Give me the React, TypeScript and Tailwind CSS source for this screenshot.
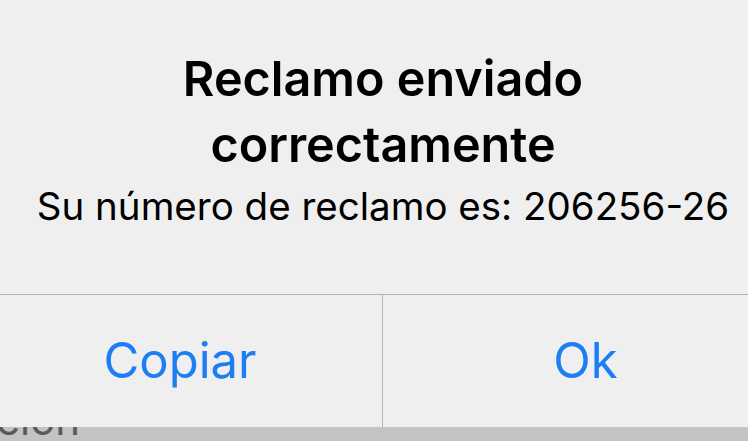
export default function App() {
  return (
    <div
      className="w-[748px] h-[441px] overflow-hidden bg-[#c3c3c3]"
      style={{ fontFamily: 'Inter, "Liberation Sans", sans-serif' }}
    >
      {/* Alert panel, wider than the window so both sides are cut */}
      <div className="w-[810px] -ml-[22px] h-[427px] flex flex-col bg-[#efefef]">
        <div className="h-[294px] flex flex-col items-center pt-[46px] text-black">
          <p className="text-[48.5px] leading-[66px] font-semibold text-center">
            Reclamo enviado
            <br />
            correctamente
          </p>
          <p className="mt-[4px] text-[38.5px] leading-[49px] text-center">
            Su número de reclamo es: 206256-26
          </p>
        </div>
        <div className="flex-1 grid grid-cols-2 border-t border-[#b4b4b4]">
          <button className="flex items-center justify-center border-r border-[#b4b4b4] text-[49px] text-[#1c7ef2]">
            Copiar
          </button>
          <button className="flex items-center justify-center text-[49px] text-[#1c7ef2]">
            Ok
          </button>
        </div>
      </div>

      {/* Text behind the alert, only its lower part shows */}
      <div className="h-[14px] overflow-hidden">
        <p className="-mt-[32px] -ml-[4px] text-[42px] leading-[50px] text-[#5a5a5a]">ción</p>
      </div>
    </div>
  )
}
